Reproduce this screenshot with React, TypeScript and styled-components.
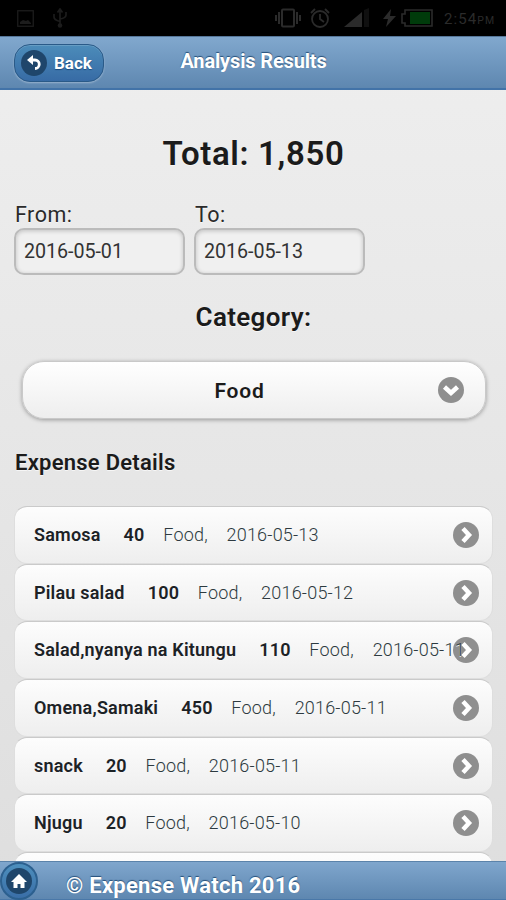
import React from "react";
import styled, { createGlobalStyle } from "styled-components";

const Global = createGlobalStyle`
  * { box-sizing: border-box; }
  html, body { margin: 0; padding: 0; }
  body { font-family: Roboto, "Liberation Sans", sans-serif; color: #1b1b1b; }
`;

const Screen = styled.div`
  width: 506px;
  height: 900px;
  display: flex;
  flex-direction: column;
  overflow: hidden;
  background: linear-gradient(#efefef, #dedede);
`;

const StatusBar = styled.div`
  flex: none;
  height: 36px;
  background: #000;
  color: #2b2b2b;
  display: flex;
  align-items: center;
  padding: 0 9px 0 17px;
`;

const StatusIcon = styled.svg<{ $gap?: number; $dim?: boolean }>`
  flex: none;
  display: block;
  margin-right: ${(p) => p.$gap ?? 0}px;
  color: ${(p) => (p.$dim ? "#1c1c1c" : "inherit")};
  fill: none;
  stroke: currentColor;
`;

const Clock = styled.span`
  margin-top: 4px;
  font-size: 15px;
  line-height: 18px;
  letter-spacing: 1.1px;
  white-space: nowrap;
  small { font-size: 10.5px; }
`;

const Header = styled.header`
  flex: none;
  height: 54px;
  display: grid;
  grid-template-columns: 104px 1fr 103px;
  align-items: start;
  background: linear-gradient(#81a8ce, #5e87b0);
  border-top: 1px solid #56779a;
  border-bottom: 2px solid #4273a8;
`;

const BackButton = styled.button`
  width: 90px;
  height: 38px;
  margin: 7px 0 0 14px;
  padding: 0 0 0 6px;
  display: flex;
  align-items: center;
  gap: 7px;
  border: 1px solid #2a5a88;
  border-radius: 16px;
  background: linear-gradient(#4c8cba, #376ba5);
  box-shadow: 0 1px 2px rgba(255, 255, 255, 0.35), inset 0 1px 0 rgba(255, 255, 255, 0.15);
  color: #fff;
  font: 700 17px/20px Roboto, sans-serif;
  text-shadow: 0 1px 1px #194b7e;
`;

const Title = styled.h1`
  margin: 12px 0 0;
  text-align: center;
  font-size: 20px;
  line-height: 24px;
  font-weight: 700;
  letter-spacing: -0.15px;
  color: #fff;
  text-shadow: 0 -1px 1px #254f7a;
  white-space: nowrap;
`;

const Disc = styled.span<{ $color: string }>`
  flex: none;
  width: 26px;
  height: 26px;
  border-radius: 50%;
  display: grid;
  place-items: center;
  background: ${(p) => p.$color};
`;

const Glyph = styled.svg`
  display: block;
  fill: none;
  stroke: #fff;
`;

const Content = styled.main`
  flex: 1;
  min-height: 0;
  overflow: hidden;
  padding: 0 13px 0 14px;
  text-shadow: 0 1px 0 #f6f6f6;
`;

const Total = styled.h2`
  margin: 44px 0 0;
  text-align: center;
  font-size: 33px;
  line-height: 40px;
  font-weight: 600;
  letter-spacing: 0.65px;
`;

const Dates = styled.div`
  margin-top: 29px;
  display: flex;
  gap: 9px;
`;

const Field = styled.label`
  display: block;
  width: 171px;
  font-size: 21.5px;
  line-height: 24px;
  font-weight: 400;
  letter-spacing: 0.5px;
  text-indent: 1px;
  color: #2a2a2a;
`;

const DateInput = styled.input`
  display: block;
  width: 171px;
  height: 47px;
  margin-top: 1px;
  padding: 0 8px;
  border: 2px solid #bbb;
  border-radius: 10px;
  background: #f0f0f0;
  box-shadow: inset 0 1px 4px rgba(0, 0, 0, 0.2);
  font: 400 19.7px Roboto, sans-serif;
  letter-spacing: -0.05px;
  text-indent: 0;
  color: #333;
`;

const CategoryTitle = styled.h3`
  margin: 26px 0 0;
  text-align: center;
  font-size: 26px;
  line-height: 32px;
  font-weight: 600;
  letter-spacing: 0.35px;
`;

const Select = styled.button`
  display: grid;
  grid-template-columns: 1fr 34px;
  align-items: center;
  width: 464px;
  height: 58px;
  margin: 28px 0 0 8px;
  padding: 0 13px 0 12px;
  border: 1px solid #c9c9c9;
  border-radius: 22px;
  background: linear-gradient(#fff, #eee);
  box-shadow: 0 1px 4px rgba(0, 0, 0, 0.35);
  font: 600 21px/26px Roboto, sans-serif;
  letter-spacing: 0.8px;
  color: #1b1b1b;
`;

const SelectedValue = styled.span`
  padding: 2px 0 0 20px;
  margin-right: 14px;
`;

const SectionTitle = styled.h4`
  margin: 31px 0 0 1px;
  font-size: 22px;
  line-height: 26px;
  font-weight: 600;
  letter-spacing: 0.25px;
`;

const List = styled.ul`
  margin: 30px 0 0;
  padding: 0;
  list-style: none;
`;

const Row = styled.li`
  display: flex;
  align-items: center;
  height: 57.7px;
  padding: 0 13px 0 19px;
  border: 1px solid #dedede;
  border-top-color: #cacaca;
  border-radius: 13px;
  background: linear-gradient(#fdfdfd, #eee);
  font-size: 18px;
  line-height: 22px;
  letter-spacing: 0.2px;
  color: #2d3a40;
  white-space: nowrap;
`;

const Name = styled.strong`
  font-weight: 600;
  color: #1c2226;
  margin-right: 23px;
`;

const Amount = styled(Name)`
  margin-right: 18.7px;
`;

const Meta = styled.span`
  font-weight: 300;
  margin-right: 18.7px;
`;

const RowArrow = styled(Disc)`
  margin-left: auto;
`;

/* A long entry runs over its arrow instead of pushing it away. */
const Texts = styled.div`
  display: flex;
  width: 0;
  flex: 1;
  z-index: 1;
`;

const Footer = styled.footer`
  flex: none;
  height: 39px;
  display: flex;
  align-items: flex-start;
  background: linear-gradient(#7fa6cd, #5e87b0);
  border-top: 1px solid #5b83aa;
  border-bottom: 1px solid #4a78a8;
`;

const HomeButton = styled.button`
  width: 38px;
  height: 38px;
  padding: 0;
  display: grid;
  place-items: center;
  border: 2px solid #2c608f;
  border-radius: 50%;
  background: linear-gradient(#4d8fbd, #3a6ea7);
`;

const Copyright = styled.span`
  margin: 11px 0 0 28px;
  color: #fff;
  font-size: 22px;
  line-height: 26px;
  font-weight: 700;
  letter-spacing: 0.25px;
  text-shadow: 0 -1px 1px #254f7a;
  white-space: nowrap;
`;

const expenses = [
  { name: "Samosa", amount: 40, date: "2016-05-13" },
  { name: "Pilau salad", amount: 100, date: "2016-05-12" },
  { name: "Salad,nyanya na Kitungu", amount: 110, date: "2016-05-11" },
  { name: "Omena,Samaki", amount: 450, date: "2016-05-11" },
  { name: "snack", amount: 20, date: "2016-05-11" },
  { name: "Njugu", amount: 20, date: "2016-05-10" },
];

export default function App() {
  return (
    <>
      <Global />
      <Screen>
        <StatusBar>
          <StatusIcon width="17" height="17" viewBox="0 0 17 17" $gap={18} $dim>
            <rect x="0.75" y="0.75" width="15.5" height="15.5" strokeWidth="1.3" />
            <path d="M3 14v-2l3-2 3 1 2-1 3 3v1z" fill="currentColor" stroke="none" />
          </StatusIcon>
          <StatusIcon width="16" height="20" viewBox="0 0 16 20" $gap={207} $dim>
            <path d="M8 17V2M5.5 4.5 8 1l2.500 3.500M2 6v3q0 3 6 4.500M14 4v3q0 3-6 4" strokeWidth="1.7" />
            <circle cx="8" cy="17.500" r="2.300" fill="currentColor" stroke="none" />
          </StatusIcon>
          <StatusIcon width="26" height="20" viewBox="0 0 26 20" $gap={9} strokeWidth="2">
            <rect x="7" y="1.500" width="12" height="17" rx="1" />
            <path d="M4 4v12M1 7v6M22 4v12M25 7v6" />
          </StatusIcon>
          <StatusIcon width="20" height="20" viewBox="0 0 20 20" $gap={14} strokeWidth="1.800">
            <circle cx="10" cy="11" r="8" />
            <path d="M10 6v5l4 3M1 5l4-4M19 5l-4-4" />
          </StatusIcon>
          <StatusIcon width="25" height="20" viewBox="0 0 25 20" $gap={14}>
            <path d="M0 19 18 4v15z" fill="currentColor" stroke="none" />
            <path d="M20 19V2l5-2v19z" fill="#101010" stroke="none" />
          </StatusIcon>
          <StatusIcon width="13" height="18" viewBox="0 0 13 18" $gap={5}>
            <path d="M8 0 0 10h5L3 18 13 7H7z" fill="currentColor" stroke="none" />
          </StatusIcon>
          <StatusIcon width="32" height="18" viewBox="0 0 32 18" $gap={11}>
            <path d="M4 1h27v16H4v-3H1V5h3z" strokeWidth="1.600" />
            <path d="M9 3h20v12H9z" fill="#003b0b" stroke="none" />
          </StatusIcon>
          <Clock>2:54<small>PM</small></Clock>
        </StatusBar>

        <Header>
          <BackButton>
            <Disc $color="#1f466b">
              <Glyph width="16" height="16" viewBox="0 0 16 16">
                <path d="M4 5h5a3.700 3.700 0 0 1 0 8.500" strokeWidth="2.800" />
                <path d="M1 5 7 0v10z" fill="#fff" stroke="none" />
              </Glyph>
            </Disc>
            Back
          </BackButton>
          <Title>Analysis Results</Title>
        </Header>

        <Content>
          <Total>Total: 1,850</Total>
          <Dates>
            <Field>From:<DateInput defaultValue="2016-05-01" /></Field>
            <Field>To:<DateInput defaultValue="2016-05-13" /></Field>
          </Dates>
          <CategoryTitle>Category:</CategoryTitle>
          <Select>
            <SelectedValue>Food</SelectedValue>
            <Disc $color="#8f8f8f">
              <Glyph width="18" height="16" viewBox="0 0 18 16">
                <path d="m2.500 5 6.500 6 6.500-6" strokeWidth="4.500" />
              </Glyph>
            </Disc>
          </Select>
          <SectionTitle>Expense Details</SectionTitle>
          <List>
            {expenses.map((e) => (
              <Row key={e.name}>
                <Texts>
                  <Name>{e.name}</Name>
                  <Amount>{e.amount}</Amount>
                  <Meta>Food,</Meta>
                  <Meta>{e.date}</Meta>
                </Texts>
                <RowArrow $color="#8f8f8f">
                  <Glyph width="16" height="18" viewBox="0 0 16 18">
                    <path d="m5 2.500 6 6.500-6 6.500" strokeWidth="4.500" />
                  </Glyph>
                </RowArrow>
              </Row>
            ))}
            <Row />
          </List>
        </Content>

        <Footer>
          <HomeButton aria-label="Home">
            <Disc $color="#1f466b">
              <Glyph width="16" height="16" viewBox="0 0 16 16">
                <path d="M8 1 0 9h2.500v6h4v-4h3v4h4V9H16z" fill="#fff" stroke="none" />
              </Glyph>
            </Disc>
          </HomeButton>
          <Copyright>© Expense Watch 2016</Copyright>
        </Footer>
      </Screen>
    </>
  );
}
